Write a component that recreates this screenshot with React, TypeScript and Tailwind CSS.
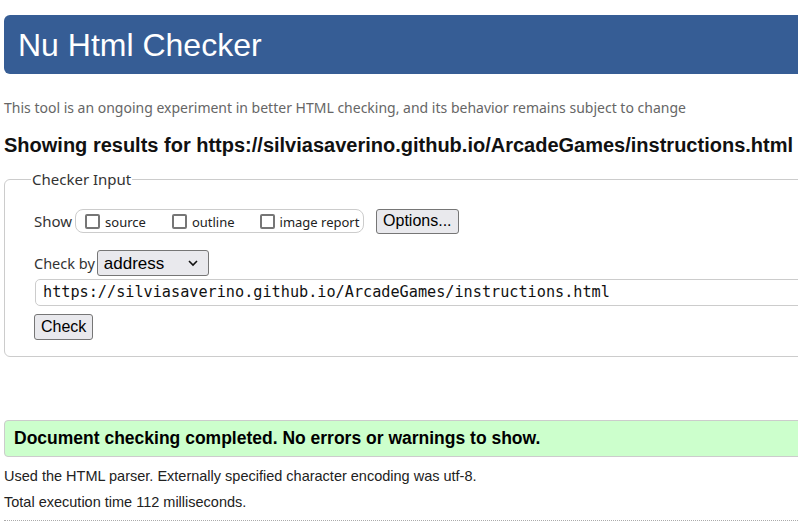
import React from "react";

const seg = { fontFamily: '"Noto Sans", "Open Sans", sans-serif' };
const ari = { fontFamily: '"Liberation Sans", Arial, sans-serif' };
const mono = { fontFamily: '"DejaVu Sans Mono", "Liberation Mono", monospace' };

function Box({ label }: { label: string }) {
  return (
    <label className="flex items-center shrink-0 whitespace-nowrap">
      <span className="shrink-0 w-[15px] h-[15px] border-2 border-[#767676] rounded-[2px] bg-white mr-[5px]" />
      <span className="text-[13px] text-[#222] leading-[16px] pt-[2px]" style={seg}>{label}</span>
    </label>
  );
}

export default function App() {
  return (
    <div className="w-[798px] h-[523px] overflow-hidden bg-white">
      <div className="w-[840px] pl-[4px] pt-[15px] flex flex-col">
        <div className="h-[59px] bg-[#365d95] rounded-l-[6px] flex items-center pl-[14px]">
          <h1 className="text-white text-[32px] leading-none" style={ari}>Nu Html Checker</h1>
        </div>
        <p className="mt-[25px] text-[14px] leading-[18px] text-[#666]" style={seg}>
          This tool is an ongoing experiment in better HTML checking, and its behavior remains subject to change
        </p>
        <h2 className="mt-[16px] text-[20px] font-bold leading-[24px] text-[#111] whitespace-nowrap" style={ari}>
          Showing results for https://silviasaverino.github.io/ArcadeGames/instructions.html
        </h2>
        <fieldset className="mt-[13px] border border-[#ccc] rounded-[6px] pl-[29px] pt-[20px] pb-[16px] w-[830px]">
          <legend className="ml-[-3px] px-[1px] text-[15px] leading-[18px] text-[#333]" style={seg}>Checker Input</legend>
          <div className="flex items-center h-[26px]">
            <span className="text-[15px] text-[#333] mr-[3px] pt-[1px]" style={seg}>Show</span>
            <div className="shrink-0 flex items-center border border-[#ccc] rounded-[8px] h-[24px] w-[289px] pl-[9px]">
              <Box label="source" />
              <div className="w-[26px] shrink-0" />
              <Box label="outline" />
              <div className="w-[25px] shrink-0" />
              <Box label="image report" />
            </div>
            <button className="shrink-0 ml-[12px] h-[25px] px-[6px] border border-[#767676] rounded-[3px] bg-[#e9e9ed] text-[16px] text-black leading-none" style={ari}>
              Options...
            </button>
          </div>
          <div className="flex items-center mt-[16px] h-[26px]">
            <span className="text-[14.5px] text-[#333] mr-[2px] pt-[1px]" style={seg}>Check by</span>
            <div className="relative w-[112px] h-[26px] border border-[#767676] rounded-[3px] bg-[#e9e9ed] flex items-center pl-[6px]">
              <span className="text-[17px] text-black leading-none" style={ari}>address</span>
              <svg className="absolute right-[10px] top-[8px]" width="10" height="8" viewBox="0 0 10 8">
                <path d="M1 2 L5 6 L9 2" fill="none" stroke="#111" strokeWidth="1.6" />
              </svg>
            </div>
          </div>
          <div className="mt-[3px] h-[27px] border border-[#ccc] rounded-[5px] flex items-center pl-[7px] ml-[1px]">
            <span className="text-[15.2px] text-[#111] leading-none" style={mono}>
              https://silviasaverino.github.io/ArcadeGames/instructions.html
            </span>
          </div>
          <div className="mt-[8px] flex">
            <button className="h-[26px] px-[6px] border border-[#767676] rounded-[3px] bg-[#e9e9ed] text-[16px] text-black leading-none" style={ari}>
              Check
            </button>
          </div>
        </fieldset>
        <div className="mt-[63px] h-[37px] bg-[#ccffcc] border border-[#ccc] rounded-l-[4px] flex items-center pl-[9px]">
          <span className="text-[17.5px] font-bold text-black leading-none" style={ari}>
            Document checking completed. No errors or warnings to show.
          </span>
        </div>
        <p className="mt-[10px] text-[14.5px] leading-[18px] text-[#222]" style={ari}>
          Used the HTML parser. Externally specified character encoding was utf-8.
        </p>
        <p className="mt-[8px] text-[14.5px] leading-[18px] text-[#222]" style={ari}>
          Total execution time 112 milliseconds.
        </p>
        <div className="mt-[9px] border-t border-dotted border-[#aaa]" />
      </div>
    </div>
  );
}
